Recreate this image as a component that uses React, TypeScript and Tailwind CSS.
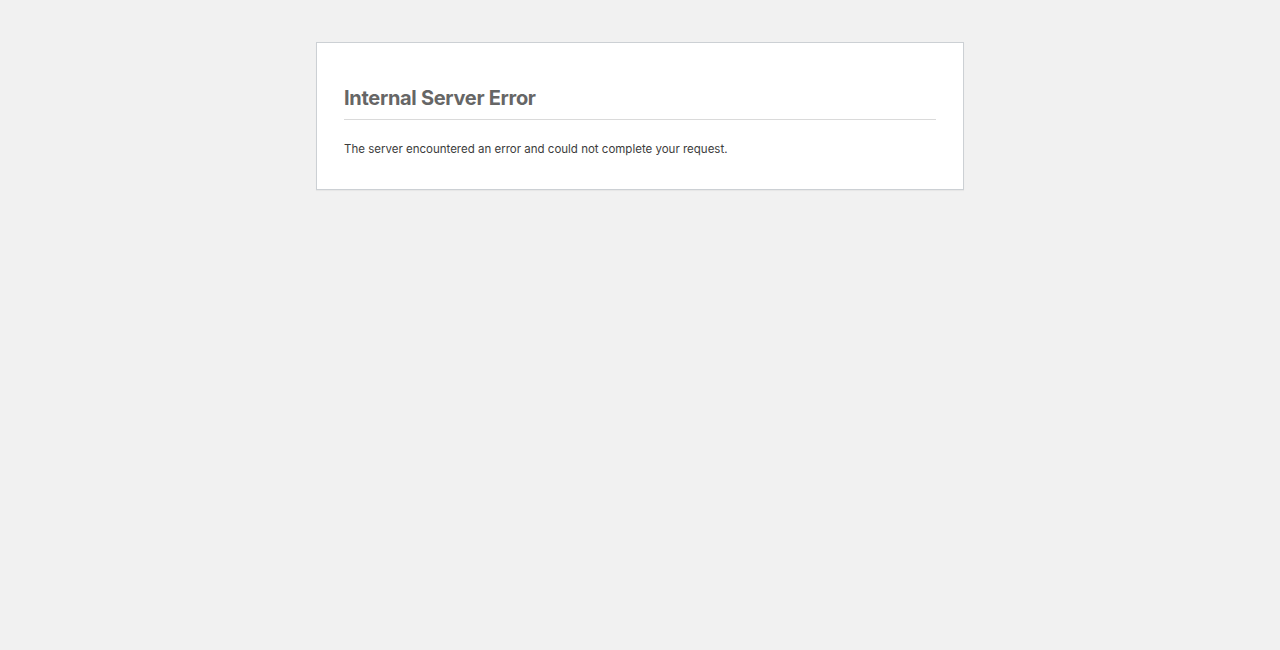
export default function App() {
  return (
    <div className="min-h-[650px] w-full bg-[#f1f1f1] pt-[42px]" style={{ fontFamily: 'Inter, "Noto Sans", sans-serif' }}>
      <div className="mx-auto w-[648px] border border-[#ccd0d4] bg-white px-[27px] pt-[40px] pb-[31px] shadow-[0_1px_1px_rgba(0,0,0,0.04)]">
        <h1 className="border-b border-[#dadada] pb-[6px] text-[20px] font-bold leading-[30px] tracking-[-0.3px] text-[#666]">
          Internal Server Error
        </h1>
        <p className="mt-[21px] text-[11.5px] leading-[17px] text-[#3c3c3c]">
          The server encountered an error and could not complete your request.
        </p>
      </div>
    </div>
  );
}
